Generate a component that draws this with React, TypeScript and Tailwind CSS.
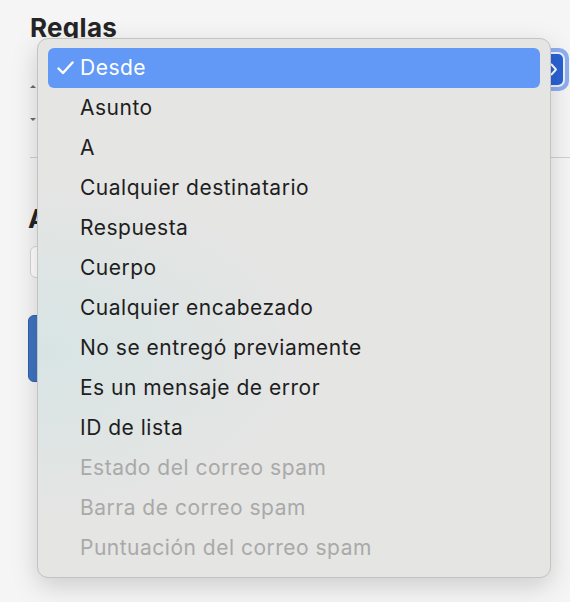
import React from "react";

const items: { label: string; disabled?: boolean; selected?: boolean }[] = [
  { label: "Desde", selected: true },
  { label: "Asunto" },
  { label: "A" },
  { label: "Cualquier destinatario" },
  { label: "Respuesta" },
  { label: "Cuerpo" },
  { label: "Cualquier encabezado" },
  { label: "No se entregó previamente" },
  { label: "Es un mensaje de error" },
  { label: "ID de lista" },
  { label: "Estado del correo spam", disabled: true },
  { label: "Barra de correo spam", disabled: true },
  { label: "Puntuación del correo spam", disabled: true },
];

export default function App() {
  return (
    <div
      className="relative w-[570px] h-[602px] overflow-hidden bg-[#f5f5f5]"
      style={{ fontFamily: "Inter, 'Noto Sans', sans-serif" }}
    >
      {/* background window content */}
      <div className="flex flex-col pl-[30px] pt-[13px]">
        <h1 className="text-[26px] leading-[30px] font-bold text-[#252525] tracking-[0.3px]">
          Reglas
        </h1>
        <div className="mt-[5px] h-[109px] flex justify-between">
          <svg width="10" height="40" viewBox="0 0 10 40" className="mt-[36px] -ml-[2px]">
            <path d="M2 4 L5 1 L8 4 Z" fill="#6a6a6a" />
            <path d="M2 34 L5 37 L8 34 Z" fill="#6a6a6a" />
          </svg>
          <div className="mr-[1px] w-[38px] h-[43px] rounded-[10px] bg-[#8eaef0] p-[4px]">
            <div className="h-full rounded-[7px] bg-[#eef2fa] p-[2px]">
              <div className="h-full rounded-[5px] bg-[#2a62d4] flex items-center justify-end pr-[5px]">
                <svg width="8" height="13" viewBox="0 0 8 13">
                  <path d="M1.5 1.5 L6 6.5 L1.5 11.5" stroke="#ffffff" strokeWidth="1.9" fill="none" strokeLinecap="round" strokeLinejoin="round" />
                </svg>
              </div>
            </div>
          </div>
        </div>
        <div className="h-px bg-[#cfcfcf]" />
        <h2 className="mt-[48px] -ml-[2px] text-[26px] leading-[26px] font-bold text-[#252525]">A</h2>
        <div className="mt-[14px] h-[32px] w-[200px] rounded-[6px] bg-white border border-[#d6d6d6]" />
        <div className="mt-[37px] -ml-[2px] h-[67px] w-[200px] rounded-[6px] bg-[#3f74c0] border border-[#2f5fa8]" />
      </div>

      {/* popup menu */}
      <div className="absolute left-[37px] top-[38px] w-[514px] rounded-[11px] border border-[#c3c3c3] bg-[#e5e5e4] shadow-[0_8px_26px_rgba(0,0,0,0.17)] overflow-hidden">
        <div className="px-[10px] py-[9px] bg-[radial-gradient(ellipse_at_0%_58%,rgba(210,228,228,0.7),rgba(229,229,228,0)_38%)]">
          {items.map((it) => (
            <div
              key={it.label}
              className={
                it.selected
                  ? "flex items-center h-[40px] rounded-[6px] bg-[#6299f6] text-white"
                  : "flex items-center h-[40px] rounded-[6px]"
              }
            >
              <div className="w-[32px] h-full flex items-center pl-[9px]">
                {it.selected && (
                  <svg width="17" height="14" viewBox="0 0 17 14">
                    <path
                      d="M1.5 7.5 L6 12 L15.5 1.5"
                      stroke="#ffffff"
                      strokeWidth="2.4"
                      fill="none"
                      strokeLinecap="round"
                      strokeLinejoin="round"
                    />
                  </svg>
                )}
              </div>
              <span
                className={
                  it.selected
                    ? "text-[21px] leading-[24px] tracking-[0.5px] text-white"
                    : it.disabled
                    ? "text-[21px] leading-[24px] tracking-[0.5px] text-[#a9a9a9]"
                    : "text-[21px] leading-[24px] tracking-[0.5px] text-[#1e1e1e]"
                }
              >
                {it.label}
              </span>
            </div>
          ))}
        </div>
      </div>
    </div>
  );
}
